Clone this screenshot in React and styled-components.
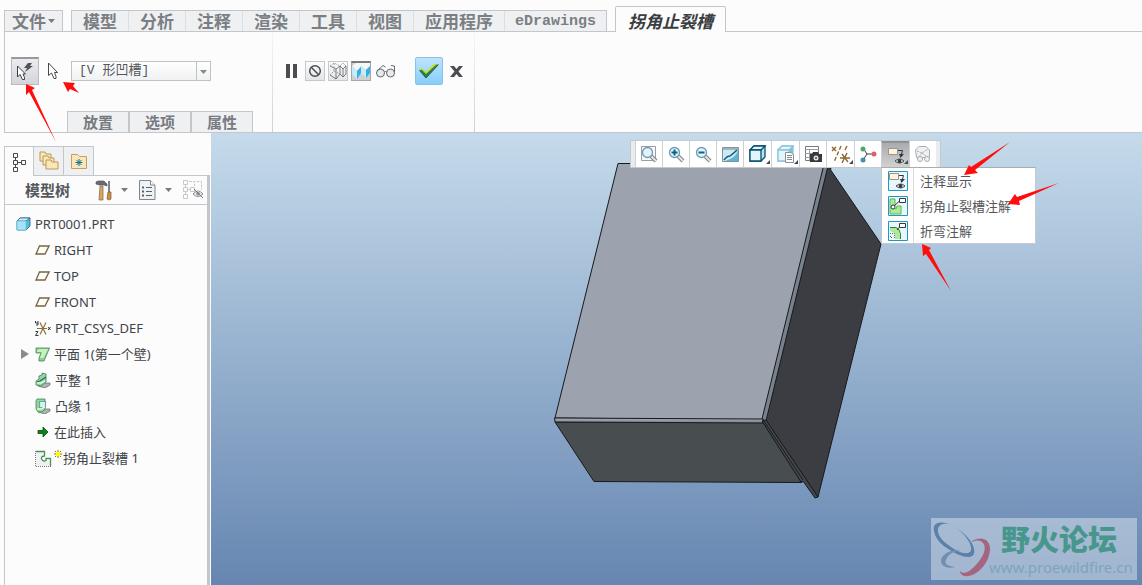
import React from "react";
import styled, { createGlobalStyle, css } from "styled-components";

const line = "#c3c6ca";
const page = "#fcfcfc";
const tabFill = "#eef0f2";
const cjk = '"Noto Sans CJK SC", sans-serif';

const GlobalStyle = createGlobalStyle`
  *, *::before, *::after { box-sizing: border-box; }
  body { margin: 0; background: ${page}; color: #404348; font: 13px/20px "Noto Sans", ${cjk}; }
  button { font: inherit; color: inherit; padding: 0; border: 0; background: none; }
  ul { margin: 0; padding: 0; list-style: none; }
  svg { display: block; flex: none; }
`;

const Window = styled.div`
  position: relative;
  display: flex;
  flex-direction: column;
  min-height: 100vh;
  overflow: hidden;
`;

/* ---------- ribbon ---------- */

const TabBar = styled.nav`
  display: flex;
  align-items: flex-end;
  gap: 8px;
  height: 32px;
  margin-left: 4px;
  border-bottom: 1px solid ${line};
`;

const TabGroup = styled.div`
  display: flex;
  border: 1px solid ${line};
  border-bottom: 0;
`;

const Tab = styled.button`
  height: 20px;
  padding: 0 11px;
  background: ${tabFill};
  color: #7b7e83;
  font: bold 17px/20px ${cjk};
  white-space: nowrap;
  & + & { border-left: 1px solid #dcdfe2; }
  ${(p) => p.$latin && css`
    padding: 2px 10px 0;
    font: bold 15px/18px "Liberation Mono", monospace;
  `}
`;

const FileTab = styled(Tab)`
  display: flex;
  align-items: center;
  gap: 2px;
  padding: 0 7px;
`;

const ActiveTab = styled.button`
  height: 26px;
  margin-bottom: -1px;
  padding: 2px 12px 0;
  border: 1px solid ${line};
  border-bottom: 0;
  border-radius: 2px 2px 0 0;
  background: ${page};
  color: #3a3d42;
  font: italic bold 17px/20px ${cjk};
  white-space: nowrap;
`;

const Ribbon = styled.section`
  display: flex;
  height: 101px;
  margin-left: 4px;
  border-left: 1px solid ${line};
  border-bottom: 1px solid ${line};
`;

const RibbonGroup = styled.div`
  display: flex;
  flex-direction: column;
  justify-content: space-between;
  padding: 25px ${(p) => p.$end}px 0 ${(p) => p.$start}px;
  border-right: 1px solid;
  border-image: linear-gradient(#f6f6f6, #cfd1d4) 1;
`;

const ControlRow = styled.div`
  display: flex;
  align-items: center;
  gap: ${(p) => p.$gap}px;
  height: 28px;
`;

const PickButton = styled.button`
  display: flex;
  align-items: center;
  width: ${(p) => (p.$on ? 28 : 24)}px;
  height: 28px;
  padding-left: 4px;
  ${(p) => p.$on && css`
    border: 1px solid #b9bbbf;
    border-top: 2px solid #97999d;
    background: linear-gradient(#ebecee, #d3d5d9);
  `}
`;

const SelectBox = styled.div`
  position: relative;
  width: 140px;
  svg { position: absolute; right: 1px; top: 1px; pointer-events: none; }
`;

const Select = styled.select`
  display: block;
  appearance: none;
  width: 100%;
  height: 20px;
  padding: 0 16px 0 7px;
  border: 1px solid #bfc2c6;
  border-radius: 0;
  background: linear-gradient(#fff, #f0f1f2);
  color: #54575b;
  font: 13px/18px "Liberation Mono", ${cjk};
`;

const SubTabs = styled.div`
  display: flex;
  margin-left: 56px;
  border: 1px solid ${line};
  border-bottom: 0;
  width: 186px;
`;

const SubTab = styled.button`
  flex: 1;
  height: 20px;
  background: ${tabFill};
  color: #777a7f;
  font: bold 15px/20px ${cjk};
  & + & { border-left: 2px solid ${line}; }
`;

const SmallButton = styled.button`
  display: grid;
  place-items: center;
  width: ${(p) => p.$wide ? 24 : 20}px;
  height: 20px;
  ${(p) => p.$frame && css`border: 1px solid #c6c8cb; background: linear-gradient(#fcfcfc, #e4e5e7);`}
  ${(p) => p.$pressed && css`border: 1px solid #a5a7aa; border-top: 2px solid #77797c; background: #cfd0d2;`}
`;

const Confirm = styled.div`
  display: flex;
  align-items: center;
  gap: 3px;
  margin-left: 14px;
`;

const AcceptButton = styled.button`
  display: grid;
  place-items: center;
  width: 28px;
  height: 28px;
  border: 1px solid #86c3ea;
  border-radius: 2px;
  background: linear-gradient(#bfe3fa, #87cefa);
`;

/* ---------- model tree ---------- */

const Main = styled.main`
  display: flex;
  flex: 1;
`;

const Sidebar = styled.aside`
  display: flex;
  flex-direction: column;
  flex: none;
  width: 207px;
  margin-left: 4px;
  padding-top: 13px;
`;

const SideTabs = styled.div`
  display: flex;
  height: 29px;
`;

const SideTab = styled.button`
  display: grid;
  place-items: center;
  width: ${(p) => (p.$active ? 29 : 30)}px;
  height: ${(p) => (p.$active ? 30 : 29)}px;
  border: 1px solid ${line};
  border-bottom: 0;
  border-right: 0;
  background: ${(p) => (p.$active ? page : tabFill)};
  position: relative;
  &:last-child { width: 31px; border-right: 1px solid ${line}; }
`;

const TreePanel = styled.section`
  flex: 1;
  margin-right: 1px;
  border-top: 1px solid ${line};
  border-left: 1px solid ${line};
  border-right: 3px solid ${line};
`;

const TreeHeader = styled.header`
  display: flex;
  align-items: center;
  height: 29px;
  padding-left: 20px;
  border-bottom: 1px solid ${line};
  h2 { margin: 0; width: 70px; color: #55585d; font: bold 15px/20px ${cjk}; }
`;

const HeaderButton = styled.button`
  display: flex;
  align-items: center;
  gap: 9px;
  margin-right: 11px;
  &:last-child { margin-right: 0; }
`;

const Tree = styled.ul`
  padding-top: 6px;
`;

const TreeItem = styled.li`
  position: relative;
  display: flex;
  align-items: center;
  gap: 4px;
  height: 26px;
  padding-left: ${(p) => (p.$root ? 11 : 30)}px;
  color: #404348;
  white-space: nowrap;
`;

const Expander = styled.button`
  position: absolute;
  left: 16px;
  top: 8px;
`;

const NewMark = styled.span`
  display: flex;
  gap: 1px;
  margin-left: -2px;
  svg { margin-top: 2px; }
`;

/* ---------- graphics area ---------- */

const Viewport = styled.section`
  position: relative;
  flex: 1;
  background: linear-gradient(#c5dbeb, #6686b1);
`;

const Model = styled.svg`
  position: absolute;
  left: 340px;
  top: 27px;
`;

const ViewBar = styled.div`
  position: absolute;
  left: 419px;
  top: 7px;
  display: flex;
  height: 28px;
  padding: 0 4px;
  border: 1px solid #c5c9ce;
  background: #e9ecef;
`;

const ViewButton = styled.button`
  position: relative;
  display: grid;
  place-items: center;
  width: ${(p) => (p.$menu ? 28 : 27)}px;
  background: #fff;
  border-left: 1px solid #cdd1d6;
  ${(p) => p.$menu && css`
    &::after {
      content: "";
      position: absolute;
      right: 1px;
      bottom: 3px;
      border: 2px solid transparent;
      border-right-color: #45484c;
      border-bottom-color: #45484c;
    }
  `}
  ${(p) => p.$on && css`
    border-top: 2px solid #8f9195;
    background: linear-gradient(#a9abae, #d0d1d3);
  `}
`;

const Menu = styled.ul`
  position: absolute;
  left: 250px;
  top: 26px;
  width: 155px;
  border: 1px solid #c5c9ce;
  border-top-color: #a9acb0;
  background: linear-gradient(90deg, #fff 31px, #d9dcdf 31px, #d9dcdf 32px, #fff 32px);
`;

const MenuButton = styled.button`
  display: flex;
  align-items: center;
  gap: 12px;
  width: 100%;
  height: 25px;
  padding-left: 6px;
  color: #54575b;
  text-align: left;
`;

const Watermark = styled.div`
  position: absolute;
  right: 5px;
  bottom: 5px;
  display: flex;
  width: 206px;
  height: 62px;
  background: rgba(210, 220, 233, 0.55);
  svg { margin-right: -2px; }
`;

const WatermarkText = styled.div`
  strong {
    display: block;
    padding-left: 12px;
    color: #48978c;
    font: 900 29px/40px ${cjk};
  }
  span {
    display: block;
    color: #7ba5bd;
    font: 15px/18px "Noto Sans", sans-serif;
  }
`;

const Pointers = styled.svg`
  position: absolute;
  left: 0;
  top: 0;
  pointer-events: none;
`;

/* ---------- icons ---------- */

const Caret = () => (
  <svg width="7" height="4" viewBox="0 0 7 4"><path d="M0 0H7L3.5 4Z" fill="#777a7e" /></svg>
);

const CursorIcon = () => (
  <svg width="14" height="18" viewBox="0 0 14 18">
    <path d="M1.500 1V13.500L4.500 11L7 16.500H9V14.500L7.500 10.500H10.500Z" fill="#fff" stroke="#45484c" />
  </svg>
);

const QuickPickIcon = () => (
  <svg width="18" height="18" viewBox="0 0 18 18">
    <path d="M1.500 3V14L4 11.500L6.500 16.500H8.500V14.500L7 11H9.500Z" fill="#fff" stroke="#3c3f43" />
    <path d="M12 0H16L14 3H17L9 9L11 5H8Z" fill="#505357" />
  </svg>
);

const PauseIcon = () => (
  <svg width="12" height="14"><path d="M0 0H4V14H0ZM7 0H11V14H7Z" fill="#4b4d50" /></svg>
);

const NoneIcon = () => (
  <svg width="14" height="14" fill="none" stroke="#4b4d50" strokeWidth="1.500">
    <circle cx="7" cy="7" r="5.300" /><path d="M3.500 3.500L10.500 10.500" />
  </svg>
);

const WireIcon = () => (
  <svg width="18" height="18" fill="none" stroke="#5d6064" strokeWidth=".8">
    <path d="M1 4L7 7V17M7 7L11 4V12L7 17L1 13M11 12L14 15L17 12V4L14 7V15M14 7L11 4" />
    <path d="M1 4L5 1L11 4L14 1L17 4M5 1V9L1 13M5 9L11 12" stroke="#8c8f93" strokeDasharray="2 1" />
  </svg>
);

const ShadedIcon = () => (
  <svg width="18" height="17">
    <path d="M0 3L4 0H18V3L14 7L9 3L5 8Z" fill="#f5f6f6" />
    <path d="M0 4L5 8V16L0 11ZM9 4L14 7V15L9 10Z" fill="#c4edfb" />
    <path d="M5 8L9 4V10L5 16ZM14 7L18 3V10L14 15Z" fill="#35aee2" />
  </svg>
);

const GlassesIcon = () => (
  <svg width="22" height="14" fill="#e7eaec" stroke="#65686c">
    <circle cx="5.500" cy="9" r="4" /><circle cx="15.500" cy="9" r="4" />
    <path d="M9.500 8Q10.500 6 11.500 8M2 7L8 1.500L10.500 3M19.500 8V2L16 1.500" fill="none" />
  </svg>
);

const CheckIcon = () => (
  <svg width="22" height="18">
    <path d="M1 8L4 7L8 11L17 2L21 2L8 16Z" fill="#2b7d5b" />
    <path d="M1 8L4 6L8 10L16 2H21L18 3L8 12L4 8Z" fill="#c4dd20" />
    <path d="M2 9L8 16L20 3" fill="none" stroke="#286044" />
  </svg>
);

const CloseIcon = () => (
  <svg width="13" height="11"><path d="M0 0H4L6.500 3L9 0H13L8.500 5.500L13 11H9L6.500 8L4 11H0L4.500 5.500Z" fill="#4b4d50" /></svg>
);

const HierarchyIcon = () => (
  <svg width="15" height="20" fill="none" stroke="#45484c">
    <path d="M1.500 1.500H5.500V5.500H1.500ZM1.500 8.500H5.500V12.500H1.500ZM1.500 15.500H5.500V19.500H1.500ZM9.500 8.500H13.500V12.500H9.500ZM3.500 5.500V8.500M3.500 12.500V15.500M5.500 10.500H9.500" />
  </svg>
);

const Folder = ({ x, y, w, h }) => (
  <path d={`M${x} ${y + h}V${y}H${x + 5}L${x + 6} ${y + 2}H${x + w}V${y + h}Z`} fill="#fbe6b8" stroke="#b9995b" />
);

const FoldersIcon = () => (
  <svg width="20" height="20">
    <Folder x={1} y={1} w={11} h={9} />
    <Folder x={4} y={5} w={11} h={9} />
    <Folder x={7} y={9} w={12} h={9} />
  </svg>
);

const FavoriteIcon = () => (
  <svg width="18" height="18">
    <path d="M1.500 16.500V2.500H7.500L9.500 4.500H16.500V16.500Z" fill="#fbe6b8" stroke="#c1a063" />
    <path d="M9 7V14M5.500 10.500H12.500M6.500 8L11.500 13M11.500 8L6.500 13" stroke="#136f94" />
  </svg>
);

const ToolsIcon = () => (
  <svg width="17" height="21">
    <path d="M1 2L3 1H9L12 4V6L9 5H4L1 4Z" fill="#686b70" stroke="#494c50" strokeWidth=".6" />
    <path d="M5 6H8V20H4Z" fill="#d5a762" stroke="#84633c" strokeWidth=".7" />
    <path d="M14 1V12" stroke="#808389" strokeWidth="2" />
    <path d="M13 12H16V19L14 20L12 19Z" fill="#cb8f42" stroke="#83592b" strokeWidth=".7" />
  </svg>
);

const ListIcon = () => (
  <svg width="17" height="20">
    <path d="M.5.500H11.500L16 5V19.500H.5Z" fill="#edf2f5" stroke="#81858a" />
    <path d="M11.500.500V5H16" fill="#fff" stroke="#81858a" />
    <path d="M7 7.500H13M7 11.500H13M7 15.500H13" stroke="#5c6064" />
    <path d="M3 7.500H5M3 11.500H5M3 15.500H5" stroke="#5c6064" strokeWidth="2" />
  </svg>
);

const HiddenTreeIcon = () => (
  <svg width="21" height="20" fill="none" stroke="#c6c8ca">
    <path d="M.5.500H4.500V4.500H.5ZM.5 7.500H4.500V11.500H.5ZM.5 14.500H4.500V18.500H.5ZM2.500 4.500V7.500M2.500 11.500V14.500M4.500 9.500H7.500M7.500 7.500H11.500V11.500H7.500Z" />
    <path d="M6 1.500H11.500V6M13.500 1.500H18.500V10" strokeDasharray="3 1" />
    <path d="M10 14Q15 8 20 14Q15 19 10 14Z" fill="#eee" stroke="#888b8e" />
    <circle cx="15" cy="13.500" r="2" fill="#888b8e" /><path d="M11 9L20 18" stroke="#777a7d" />
  </svg>
);

const PartIcon = () => (
  <svg width="15" height="14" stroke="#1e617d" strokeWidth=".8">
    <path d="M1 4L4 1H14V9L10 13H1Z" fill="#55b9df" />
    <path d="M1 4L4 1H14L10 4Z" fill="#d4f2fb" /><path d="M1 4H10V13H1Z" fill="#a6e3f8" stroke="#6cc0de" />
  </svg>
);

const PlaneIcon = () => (
  <svg width="15" height="10"><path d="M4.500 1H14L10 9H1Z" fill="none" stroke="#79633b" strokeWidth="1.300" /></svg>
);

const CsysIcon = () => (
  <svg width="16" height="17" fill="none">
    <path d="M2 8.500H12M5 2.500L11 14.500M11 2.500L5 14.500" stroke="#8e7040" strokeWidth="1.200" />
    <path d="M.5 1V3H3M3 1V5H1M.5 11.500H3L.5 15.500H3.500M13 7L15.500 10M15.500 7L13 10" stroke="#35383c" />
  </svg>
);

const WallIcon = () => (
  <svg width="15" height="15" stroke="#44844d" strokeWidth=".8">
    <path d="M1 1H14.500L9 14H4V11L6 6H1Z" fill="#8fcf95" />
    <path d="M5 2H13L8.500 11H5L7 5H2V3Z" fill="#c5f0bf" stroke="none" />
  </svg>
);

const FlatIcon = ({ dotted }) => (
  <svg width="16" height="16" strokeWidth=".8">
    <path d="M5 11H15V13L10 16L3 14Z" fill="#adb2b4" stroke="#6e7376" />
    <path d={dotted ? "M2 1H10V11L7 14H3L1 11V3Z" : "M4 4L7 3V1L11 2V10L6 14L1 13V9L4 7Z"} fill="#98d597" stroke="#3d8057" />
    <path d={dotted ? "M4.500 3.500H10.500V9.500H4.500Z" : "M2 10L5 9L11 5"} fill={dotted ? "#d8f3ef" : "none"} stroke="#146a8c" strokeDasharray={dotted ? "1 1" : undefined} strokeWidth="1.200" />
    <path d="M2 11H6L10 9" fill="none" stroke="#dbfbd3" strokeWidth="1.500" />
  </svg>
);

const InsertIcon = () => (
  <svg width="15" height="12"><path d="M3 4.500H8V1L13 6L8 11V7.500H3Z" fill="#008b16" stroke="#064507" strokeWidth=".8" /></svg>
);

const ReliefIcon = () => (
  <svg width="17" height="17" fill="none">
    <path d="M1 1H9.500V6H7V11H16V16H1Z" fill="#eef1f0" />
    <path d="M.5 1V16.500H16" stroke="#777" strokeDasharray="1 1" />
    <path d="M1 1.500H9.500V6Q6 6 6.500 9Q8 12 11 10.500V8.500H15.500V16" stroke="#4c9055" strokeWidth="1.300" />
  </svg>
);

const SparkIcon = () => (
  <svg width="8" height="8"><path d="M4 0V8M0 4H8M1 1L7 7M7 1L1 7" stroke="#887b00" /><path d="M2 2H6V6H2Z" fill="#ffff00" /></svg>
);

const LensIcon = ({ sign, frame }) => (
  <svg width="18" height="18" fill="none">
    {frame && <path d="M1.500 1.500H15.500V15.500H1.500Z" fill="#f7f8f8" stroke="#999fa4" />}
    <path d="M11 11L16 16" stroke="#84878a" strokeWidth="4" />
    <path d="M11 11L16 16" stroke="#e2e3e4" strokeWidth="2" />
    <circle cx="7.500" cy="7.500" r="5" fill="#e2f3fa" stroke="#6c9db4" strokeWidth="1.300" />
    {sign && <path d={sign} stroke="#08658a" strokeWidth="2" />}
  </svg>
);

const RepaintIcon = () => (
  <svg width="17" height="17">
    <path d="M.5 1.500H16.500V15.500H.5Z" fill="#c9ebf4" stroke="#7d959f" />
    <path d="M1 2H16V4H1Z" fill="#9fb4bd" />
    <path d="M16 4Q14 12 3 15H16Z" fill="#5fb4cf" />
    <path d="M2 14Q5 10 8 10Q12 7 15 4" fill="none" stroke="#165b7b" strokeWidth="1.500" />
  </svg>
);

const BoxIcon = ({ list }) => (
  <svg width="18" height="18" fill="#e5f7fc" stroke={list ? "#8cc6db" : "#06506e"} strokeWidth="1.300">
    <path d="M1 5L5 1H16V12L12 16H1Z" fill={list ? "#75c3df" : "#b8e5f3"} />
    <path d="M1 5L5 1H16L12 5Z" /><path d="M1 5H12V16H1Z" fill="#e2f5fb" />
    {list && <path d="M8.500 7.500H14L16.500 10V17.500H8.500Z" fill="#fff" stroke="#8b8f93" strokeWidth="1" />}
    {list && <path d="M10 10.500H15M10 12.500H15M10 14.500H15" stroke="#85898d" strokeWidth="1" />}
  </svg>
);

const CaptureIcon = () => (
  <svg width="18" height="18">
    <path d="M1.500 1.500H14.500V15.500H1.500Z" fill="#fff" stroke="#777a7d" />
    <path d="M1 4.500H15M1 8.500H15M1 12.500H15M5.500 4V15" stroke="#999c9f" />
    <path d="M6 9H8L9 7H14L15 9H18V17H6Z" fill="#36393d" />
    <circle cx="12" cy="13" r="2.500" fill="#e2e5e7" /><circle cx="12" cy="13" r="1" fill="#45484c" />
  </svg>
);

const DatumIcon = () => (
  <svg width="19" height="19" fill="none" stroke="#8b6a30" strokeWidth="1.400">
    <path d="M1 2L5 6M5 2L1 6" /><path d="M10 1L3 17" strokeDasharray="4 2" /><path d="M16 1L14 5M11 9L17 17M16 8L11 18M9 13H19" />
  </svg>
);

const SpinIcon = () => (
  <svg width="18" height="18">
    <path d="M4 3L8 9L4 15M8 9H15" fill="none" stroke="#3b3e42" />
    <circle cx="4" cy="4" r="2.500" fill="#58a36c" /><circle cx="4" cy="15" r="2.500" fill="#438fb2" /><circle cx="15" cy="9" r="2.500" fill="#dd6263" />
  </svg>
);

const AnnotationGlyph = () => (
  <g fill="none">
    <path d="M1.500 2.500H10.500V8.500H1.500Z" fill="#fff3dc" stroke="#9b958b" />
    <path d="M11 4.500H15.500L14 10" stroke="#35383c" /><path d="M12 8H17L13.500 12Z" fill="#35383c" />
    <path d="M8 15Q12.500 11 17 15Q12.500 19 8 15Z" fill="#fff" stroke="#45484c" />
    <circle cx="12.500" cy="15" r="2" fill="#35383c" />
  </g>
);

const AnnotationIcon = () => <svg width="18" height="19"><AnnotationGlyph /></svg>;

const DisabledIcon = () => (
  <svg width="18" height="18" fill="#f0f1f2" stroke="#a9acaf">
    <path d="M1.500 5L5 1.500H12L15.500 5V12.500H2.500Z" /><path d="M3 6L8 8L14 4M8 8L5 12M8 8L12 11" fill="none" strokeDasharray="2 1" />
    <circle cx="6" cy="14" r="2.500" /><circle cx="13" cy="14" r="2.500" />
  </svg>
);

const MenuFrame = ({ children }) => (
  <svg width="20" height="20"><path d="M.5.500H19.500V19.500H.5Z" fill="#e8f7fb" stroke="#2297c5" />{children}</svg>
);

const FlagGlyph = () => (
  <path d="M11.500 2.500H17.500V6.500H11.500ZM11.500 5L6 10" fill="#fff" stroke="#35383c" />
);

const ReliefNoteIcon = () => (
  <MenuFrame>
    <path d="M2 3H7V10L5 12L8 13L9 10H13V18H2Z" fill="#aceb98" stroke="#61b55a" />
    <FlagGlyph /><circle cx="5" cy="11" r="2" fill="#fff" stroke="#35383c" />
  </MenuFrame>
);

const BendNoteIcon = () => (
  <MenuFrame>
    <path d="M2 6.500H9Q12 8 12 18H7Q8 11 2 10Z" fill="#aceb98" />
    <path d="M2 6.500H8Q12 8 12.500 13V18" fill="none" stroke="#357d3e" />
    <path d="M2 12.500H6.500V18M2 15.500H3.500V18" fill="none" stroke="#65686b" strokeDasharray="1 1" />
    <path d="M11.500 2.500H17.500V6.500H11.500ZM11.500 6L9 9" fill="#fff" stroke="#35383c" />
  </MenuFrame>
);

const WatermarkLogo = () => (
  <svg width="60" height="62" viewBox="0 0 60 62">
    <path fillRule="evenodd" fill="#5b80a9" d="M3 13C1 3 12 2 24 9C37 17 45 28 43 36C40 42 28 38 19 32C10 27 4 20 3 13ZM7 14C8 20 15 26 23 31C31 36 39 37 40 32C41 25 33 15 24 9C14 3 6 6 7 14Z" />
    <path fill="#a5657e" d="M41 23C49 18 59 20 59 31C59 43 48 57 37 58C32 59 29 56 29 53C33 57 38 54 44 48C53 39 56 29 52 25C49 22 46 22 41 24Z" />
    <path fill="#718fb3" d="M30 33C20 30 10 37 10 43C10 49 18 51 24 49C17 48 13 46 15 42C17 36 23 33 30 33Z" />
  </svg>
);

/* ---------- data ---------- */

const tabs = ["模型", "分析", "注释", "渲染", "工具", "视图", "应用程序"];

const treeItems = [
  { label: "PRT0001.PRT", icon: <PartIcon />, root: true },
  { label: "RIGHT", icon: <PlaneIcon /> },
  { label: "TOP", icon: <PlaneIcon /> },
  { label: "FRONT", icon: <PlaneIcon /> },
  { label: "PRT_CSYS_DEF", icon: <CsysIcon /> },
  { label: "平面 1(第一个壁)", icon: <WallIcon />, expandable: true },
  { label: "平整 1", icon: <FlatIcon /> },
  { label: "凸缘 1", icon: <FlatIcon dotted /> },
  { label: "在此插入", icon: <InsertIcon /> },
  { label: "拐角止裂槽 1", icon: <ReliefIcon />, fresh: true },
];

const viewTools = [
  { name: "重新调整", icon: <LensIcon frame /> },
  { name: "放大", icon: <LensIcon sign="M7.500 4.500V10.500M4.500 7.500H10.500" /> },
  { name: "缩小", icon: <LensIcon sign="M4.500 7.500H10.500" /> },
  { name: "重画", icon: <RepaintIcon /> },
  { name: "显示样式", icon: <BoxIcon />, menu: true },
  { name: "已保存方向", icon: <BoxIcon list />, menu: true },
  { name: "视图管理器", icon: <CaptureIcon /> },
  { name: "基准显示", icon: <DatumIcon />, menu: true },
  { name: "旋转中心", icon: <SpinIcon /> },
  { name: "注释显示", icon: <AnnotationIcon />, menu: true, on: true },
  { name: "动画", icon: <DisabledIcon /> },
];

const menuItems = [
  { label: "注释显示", icon: <MenuFrame><AnnotationGlyph /></MenuFrame> },
  { label: "拐角止裂槽注解", icon: <ReliefNoteIcon /> },
  { label: "折弯注解", icon: <BendNoteIcon /> },
];

export default function App() {
  return (
    <Window>
      <GlobalStyle />
      <TabBar>
        <TabGroup><FileTab>文件<Caret /></FileTab></TabGroup>
        <TabGroup>
          {tabs.map((t) => <Tab key={t}>{t}</Tab>)}
          <Tab $latin>eDrawings</Tab>
        </TabGroup>
        <ActiveTab>拐角止裂槽</ActiveTab>
      </TabBar>

      <Ribbon>
        <RibbonGroup $start={6} $end={19}>
          <ControlRow $gap={4}>
            <PickButton $on aria-label="快速选取"><QuickPickIcon /></PickButton>
            <PickButton aria-label="选取"><CursorIcon /></PickButton>
            <SelectBox>
              <Select aria-label="止裂槽类型" defaultValue="v">
                <option value="v">[V 形凹槽]</option>
              </Select>
              <svg width="14" height="18"><path d="M.5 0V18" stroke="#bfc2c6" /><path d="M4 8H11L7.500 12Z" fill="#85888c" /></svg>
            </SelectBox>
          </ControlRow>
          <SubTabs>
            <SubTab>放置</SubTab>
            <SubTab>选项</SubTab>
            <SubTab>属性</SubTab>
          </SubTabs>
        </RibbonGroup>
        <RibbonGroup $start={9} $end={8}>
          <ControlRow $gap={3}>
            <SmallButton aria-label="暂停"><PauseIcon /></SmallButton>
            <SmallButton $frame aria-label="无预览"><NoneIcon /></SmallButton>
            <SmallButton $frame aria-label="分离"><WireIcon /></SmallButton>
            <SmallButton $pressed aria-label="连接"><ShadedIcon /></SmallButton>
            <SmallButton $wide aria-label="校验"><GlassesIcon /></SmallButton>
            <Confirm>
              <AcceptButton aria-label="确定"><CheckIcon /></AcceptButton>
              <SmallButton aria-label="取消"><CloseIcon /></SmallButton>
            </Confirm>
          </ControlRow>
        </RibbonGroup>
      </Ribbon>

      <Main>
        <Sidebar>
          <SideTabs>
            <SideTab $active aria-label="模型树"><HierarchyIcon /></SideTab>
            <SideTab aria-label="文件夹浏览器"><FoldersIcon /></SideTab>
            <SideTab aria-label="收藏夹"><FavoriteIcon /></SideTab>
          </SideTabs>
          <TreePanel>
            <TreeHeader>
              <h2>模型树</h2>
              <HeaderButton aria-label="设置"><ToolsIcon /><Caret /></HeaderButton>
              <HeaderButton aria-label="显示"><ListIcon /><Caret /></HeaderButton>
              <HeaderButton aria-label="隐藏项"><HiddenTreeIcon /></HeaderButton>
            </TreeHeader>
            <Tree>
              {treeItems.map((item) => (
                <TreeItem key={item.label} $root={item.root}>
                  {item.expandable && (
                    <Expander aria-label="展开">
                      <svg width="8" height="10"><path d="M0 0L8 5L0 10Z" fill="#8a8c8f" /></svg>
                    </Expander>
                  )}
                  {item.icon}
                  {item.fresh ? <NewMark><SparkIcon />{item.label}</NewMark> : <span>{item.label}</span>}
                </TreeItem>
              ))}
            </Tree>
          </TreePanel>
        </Sidebar>

        <Viewport>
          <Model width="335" height="342" viewBox="551 160 335 342" strokeLinejoin="round">
            <defs>
              <linearGradient id="edge" x1="0" y1="0" x2="0" y2="1">
                <stop offset="0" stopColor="#aeb4c2" /><stop offset="1" stopColor="#737c87" />
              </linearGradient>
            </defs>
            <g stroke="#17191c">
              <path d="M618 163.500H825L764 420L555 418Z" fill="#9ca2ae" />
              <path d="M825 160L831 168L767 422L762 419Z" fill="#77828d" />
              <path d="M828 166L881 244L818 497L766 421Z" fill="#3b3d42" />
              <path d="M555 422H763L802 482.500L594 481.500Z" fill="#484d50" />
              <path d="M554.500 418L763 419V423L555 422Z" fill="url(#edge)" />
              <path d="M762 421L766 420L818 497L815 498L803 481L801 482Z" fill="#43494b" />
              <path d="M764 421L803 480" />
            </g>
          </Model>

          <ViewBar>
            {viewTools.map((t) => (
              <ViewButton key={t.name} $menu={t.menu} $on={t.on} aria-label={t.name}>{t.icon}</ViewButton>
            ))}
            <Menu>
              {menuItems.map((m) => (
                <li key={m.label}><MenuButton>{m.icon}{m.label}</MenuButton></li>
              ))}
            </Menu>
          </ViewBar>

          <Watermark>
            <WatermarkLogo />
            <WatermarkText>
              <strong>野火论坛</strong>
              <span>www.proewildfire.cn</span>
            </WatermarkText>
          </Watermark>
        </Viewport>
      </Main>

      <Pointers width="1070" height="300" fill="#ff0d0d">
        <path d="M26 84L35 88L32 90L56 142L29 92L26 95Z" />
        <path d="M63 82L75 83L73 86L79 93L70 89L68 92Z" />
        <path d="M964 175L969 165L971 167L1010 142L975 170L978 173Z" />
        <path d="M1008 204L1015 194L1017 197L1059 183L1019 201L1020 205Z" />
        <path d="M922 244L931 248L929 250L951 291L926 254L923 256Z" />
      </Pointers>
    </Window>
  );
}
